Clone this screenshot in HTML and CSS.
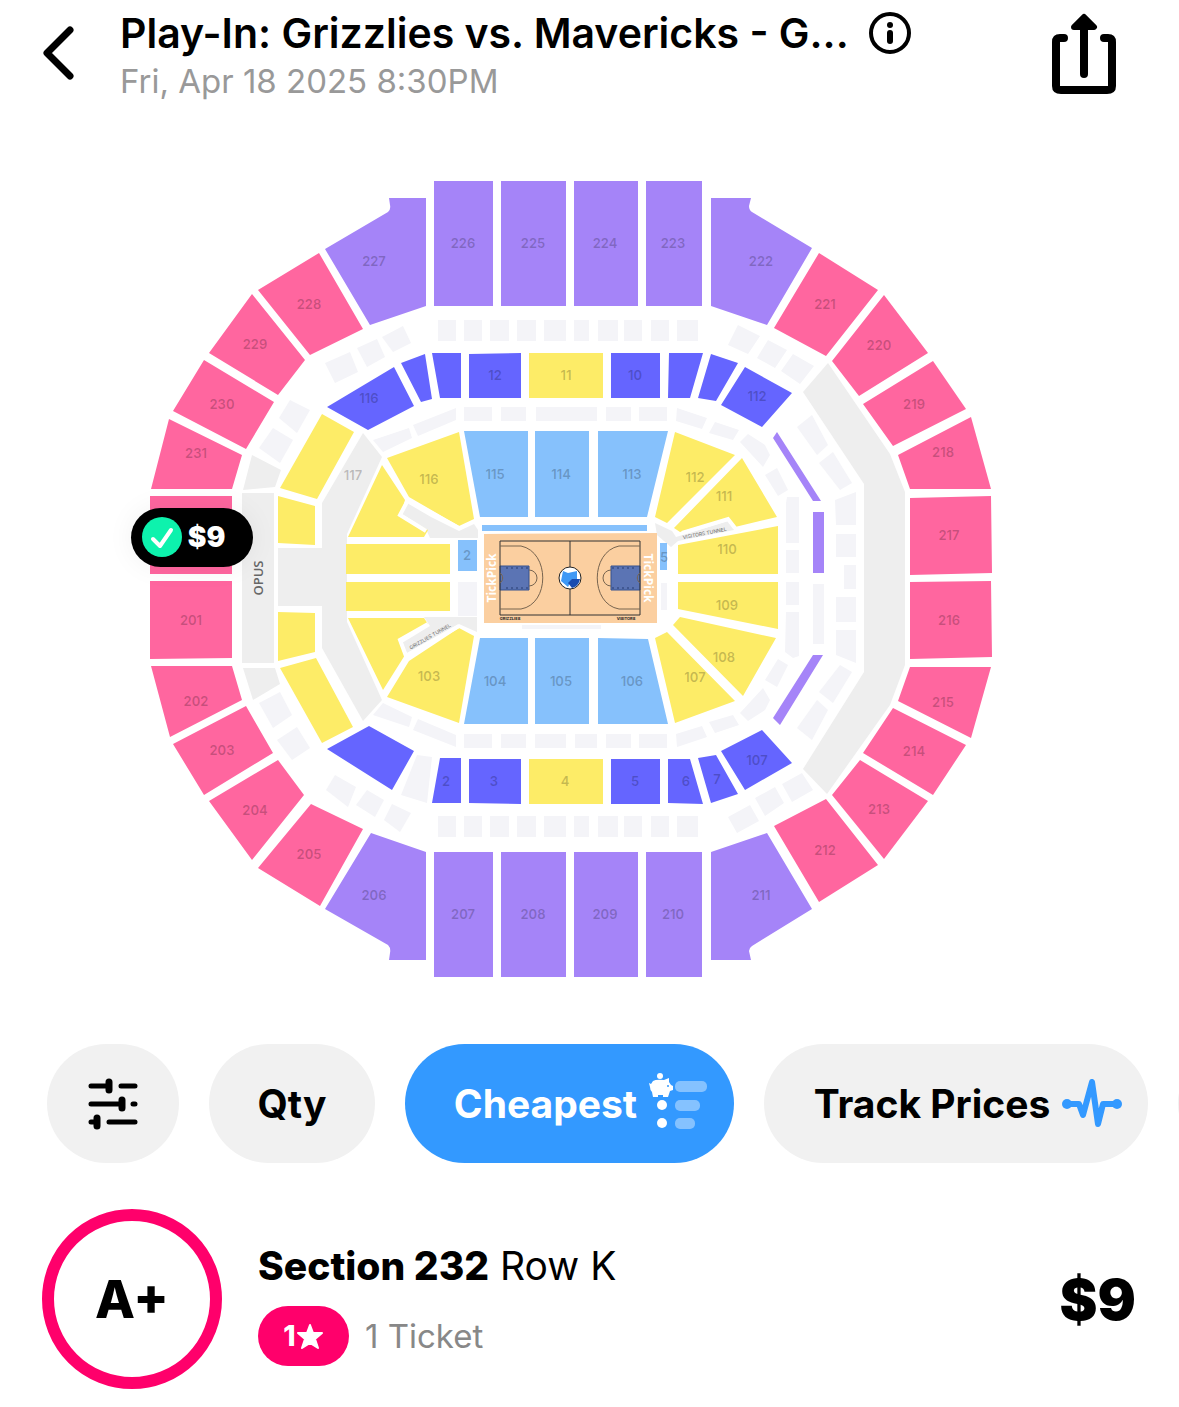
FILE: index.html
```html
<!DOCTYPE html>
<html lang="en">
<head>
<meta charset="utf-8">
<meta name="viewport" content="width=device-width, initial-scale=1">
<title>Play-In: Grizzlies vs. Mavericks</title>
<link rel="stylesheet" href="styles.css">
</head>
<body>
<header class="header">
  <button class="icon-button back" type="button" aria-label="Back">
    <svg width="34" height="56" viewBox="0 0 34 56"><path d="M29 5 L6 28 L29 51" fill="none" stroke="#000" stroke-width="7" stroke-linecap="round" stroke-linejoin="round"/></svg>
  </button>
  <div class="event">
    <div class="title-row">
      <h1 class="title">Play-In: Grizzlies vs. Mavericks - G...</h1>
      <button class="icon-button" type="button" aria-label="Event information">
        <svg width="42" height="42" viewBox="0 0 42 42"><circle cx="21" cy="21" r="19" fill="none" stroke="#000" stroke-width="4"/><circle cx="21" cy="13" r="3"/><path d="M21 21 V29" stroke="#000" stroke-width="6" stroke-linecap="round"/></svg>
      </button>
    </div>
    <p class="date">Fri, Apr 18 2025 8:30PM</p>
  </div>
  <button class="icon-button share" type="button" aria-label="Share">
    <svg width="64" height="82" viewBox="0 0 64 82"><path d="M12 25 H8 Q4 25 4 29 V73 Q4 77 9 77 H55 Q60 77 60 73 V29 Q60 25 56 25 H52" fill="none" stroke="#000" stroke-width="8" stroke-linecap="round"/><path d="M32 15 V61" stroke="#000" stroke-width="8" stroke-linecap="round"/><path d="M32 4 L42 14 H22 Z" stroke="#000" stroke-width="6" stroke-linejoin="round"/></svg>
  </button>
</header>

<main>
<section class="map" aria-label="Seating map">
<svg class="arena" viewBox="0 120 1179 900">
  <g class="gray">
    <path d="M363 433L382 457 347 534V622L382 700 363 721 322 648V606H278V548H322V503Z"/>
    <path d="M242 493H274V663H242ZM252 455L281 470 275 487 243 490ZM243 668H275L280 684 253 700Z"/>
    <path d="M828 363L803 392 864 484V672L803 769 827 794 890 705 905 665V492L890 454Z"/>
    <path d="M407 503L431 517 459 531 474 524 478 530V538H430L426 529 402 514Z"/>
    <path d="M402 643L430 626 424 617H477V632L459 624 407 653Z"/>
    <path d="M655 523L672 531 676 537 728 521 734 530 678 541 671 547 657 535Z"/>
  </g>
  <g class="suite">
    <path d="M438 320h18v21h-18zM464 320h18v21h-18zM490 320h19v21h-19zM517 320h19v21h-19zM544 320h22v21h-22zM574 320h15v21h-15zM598 320h20v21h-20zM624 320h18v21h-18zM651 320h18v21h-18zM677 320h21v21h-21z"/>
    <path d="M438 816h18v21h-18zM464 816h18v21h-18zM490 816h19v21h-19zM517 816h19v21h-19zM544 816h22v21h-22zM574 816h15v21h-15zM598 816h20v21h-20zM624 816h18v21h-18zM651 816h18v21h-18zM677 816h21v21h-21z"/>
    <path d="M464 407h28v14h-28zM501 407h25v14h-25zM536 407h61v14h-61zM606 407h25v14h-25zM639 407h28v14h-28z"/>
    <path d="M464 734h28v14h-28zM501 734h25v14h-25zM535 734h31v14h-31zM575 734h22v14h-22zM606 734h25v14h-25zM639 734h28v14h-28z"/>
    <path d="M325 363L350 352 358 372 335 383ZM357 348L377 339 385 357 367 367ZM382 337L403 326 411 343 393 352Z"/>
    <path d="M728 345L738 325 760 336 748 354ZM757 358L768 340 787 350 775 368ZM781 371L793 354 814 366 800 384Z"/>
    <path d="M728 817L750 805 759 821 737 833ZM755 798L775 787 784 803 765 816ZM782 784L802 773 813 790 792 802Z"/>
    <path d="M326 790L335 775 356 787 348 807ZM356 805L367 790 384 800 375 817ZM384 820L392 804 411 813 400 832Z"/>
    <path d="M279 418L290 400 310 410 297 433ZM259 448L273 428 293 440 280 463ZM259 703L280 692 292 715 273 728ZM277 740L297 727 310 748 292 760Z"/>
    <path d="M373 715L383 703 412 717 409 727ZM413 730L418 719 456 735V747ZM373 440L383 452 412 438 409 428ZM413 425L418 436 456 420V408Z"/>
    <path d="M676 421L677 408 707 418 702 429ZM709 433L715 422 739 430 733 440ZM740 442L748 434 765 445 770 455 763 467ZM765 475L777 468 788 490 778 496Z"/>
    <path d="M676 734L677 747 707 737 702 726ZM709 722L715 733 739 725 733 715ZM740 713L748 721 765 710 770 700 763 688ZM765 680L777 687 788 665 778 659Z"/>
    <path d="M787 497H799V543H786V503ZM786 550h13v23h-13zM786 582h13v23h-13zM786 612h13v44l-6 2 -8-6zM813 584h11v60h-11zM458 582h19v34h-19zM661 583h6v27h-6zM522 625h79v4h-79z"/>
    <path d="M797 427L812 415 828 445 817 455ZM819 463L833 452 852 483 840 490ZM835 500L856 492V525H836ZM836 534h20v23h-20zM844 565h12v24h-12zM836 597h20v25h-20zM836 630H856V663L836 655ZM797 728L812 740 828 710 817 700ZM819 692L833 703 852 672 840 665Z"/>
    <path d="M417 755L432 757 427 803 401 795Z"/>
  </g>
  <g class="purple">
    <path d="M434 181H493V306H434ZM501 181H566V306H501ZM574 181H638V306H574ZM646 181H702V306H646Z"/>
    <path d="M434 852H493V977H434ZM501 852H566V977H501ZM574 852H638V977H574ZM646 852H702V977H646Z"/>
    <path d="M389 198H426V306L370 325 325 249 388 212Q391 209 390 205ZM711 198H751L749 206Q749 210 752 212L812 248 767 325 711 306Z"/>
    <path d="M389 960H426V852L371 833 325 909 388 945Q391 948 390 953ZM711 960H751L749 951Q749 948 752 946L812 909 767 833 711 852Z"/>
    <path d="M773 438L777 432 821 501H813ZM813 512h11v61h-11zM813 655H823L780 725 773 718Z"/>
  </g>
  <g class="pink">
    <path d="M319 253L363 329 310 355 258 290ZM252 294L305 360 278 395 209 353ZM204 360L274 402 246 449 173 411ZM169 419L242 455 232 489H151ZM150 496H232V574H150ZM150 581H232V658L150 659Z"/>
    <path d="M819 253L878 290 826 356 774 328ZM884 295L928 353 859 396 832 361ZM933 361L966 409 893 446 863 404ZM971 417L991 489H910L898 455ZM910 498L991 496 992 573 910 575ZM910 582L991 581 992 657 910 659Z"/>
    <path d="M151 666H232L242 700 170 737ZM246 706L273 753 204 795 173 744ZM278 760L304 795 252 860 209 801ZM311 804L363 829 320 906 258 868Z"/>
    <path d="M910 667H991L971 738 898 701ZM893 708L966 745 933 795 863 753ZM860 760L928 801 884 859 832 795ZM826 799L878 865 819 902 774 826Z"/>
  </g>
  <g class="indigo">
    <path d="M327 407L394 367 414 406 368 430ZM401 363L425 354 432 399 421 402ZM432 353H461V398H440ZM469 354L521 353V398H469ZM611 353H660V398H611ZM669 353H703L690 398H668ZM711 354L738 363 716 401 698 398ZM745 367L792 393 762 427 721 405Z"/>
    <path d="M327 749L369 726 414 751 392 790ZM440 758H461V803H432ZM469 759H521V804L469 803ZM611 759H660V804H611ZM668 759H690L703 804 668 803ZM698 758L716 755 738 794 711 803ZM762 730L792 763 745 790 721 751Z"/>
  </g>
  <g class="yellow">
    <path d="M529 353H603V398H529ZM529 759H603V804H529Z"/>
    <path d="M322 414L354 432 317 499 280 488ZM278 496L315 506V545L278 543ZM278 612L315 613V652L278 661ZM280 668L316 658 353 727 322 743Z"/>
    <path d="M387 458L459 432 474 519 459 526 409 497ZM382 465L405 500 401 515 428 530 424 537H348ZM346 544H450V574H346ZM346 582H450V611H346ZM348 618H424L428 624 401 640 405 655 383 690ZM387 697L409 661 459 628 474 636 459 723Z"/>
    <path d="M675 432L735 455 667 523 655 517ZM742 458L777 517 735 527 728 518 680 532 674 528ZM678 545L778 526V574H678ZM678 582H778V629L678 609ZM673 625L680 617 776 638 743 696ZM655 638L667 632 735 701 675 723Z"/>
  </g>
  <g class="sky">
    <path d="M464 431H528V517H480ZM535 431H589V517H535ZM598 431H668L647 517H598ZM480 638H528V724H464ZM535 638H589V724H535ZM598 638L648 639 668 724H598ZM482 525H647V531H482ZM458 540H477V571H458ZM660 543H667V570H660Z"/>
  </g>

  <path class="tunnel" d="M459 528L408 500 400 515 426 531M428 624L400 640 406 656 459 626M682 533L728 519 735 528"/>
  <path class="wood" d="M484 534L657 533V623H484Z"/>
  <g class="court">
    <path class="key" d="M500 566h29v24h-29zM611 566h29v24h-29z"/>
    <path d="M500 541H640V615H500ZM570 541V615"/>
    <path class="thin" d="M500 546H521C550 552 550 604 521 609H500M640 546H619C590 552 590 604 619 609H640M529 570A8 8 0 0 1 529 586M611 570A8 8 0 0 0 611 586M500 573A6 6 0 0 1 500 583M640 573A6 6 0 0 0 640 583"/>
    <path class="dots" d="M506 568H528M506 588H528M612 568H634M612 588H634"/>
    <circle class="ball" cx="570" cy="578" r="11"/>
    <path class="logo-light" d="M563 571L568 573 577 571 577 580 571 581 568 587 561 581Z"/>
    <path class="logo-dark" d="M568 583L572 579 580 579Q579 586 572 588Z"/>
  </g>
  <text class="brand" transform="translate(496 578) rotate(-90)">TickPick</text>
  <text class="brand" transform="translate(644 578) rotate(90)">TickPick</text>
  <text class="tiny dark" x="510" y="620">GRIZZLIES</text>
  <text class="tiny dark" x="626" y="620">VISITORS</text>
  <text class="tiny" transform="translate(431 638) rotate(-30)">GRIZZLIES TUNNEL</text>
  <text class="tiny" transform="translate(705 535) rotate(-11)">VISITORS TUNNEL</text>
  <text class="opus" transform="translate(263 578) rotate(-90)">OPUS</text>

  <g class="label">
    <text x="463" y="248">226</text><text x="533" y="248">225</text><text x="605" y="248">224</text><text x="673" y="248">223</text>
    <text x="374" y="266">227</text><text x="761" y="266">222</text><text x="309" y="309">228</text><text x="825" y="309">221</text>
    <text x="255" y="349">229</text><text x="879" y="350">220</text><text x="222" y="409">230</text><text x="914" y="409">219</text>
    <text x="196" y="458">231</text><text x="943" y="457">218</text><text x="949" y="540">217</text><text x="191" y="625">201</text><text x="949" y="625">216</text>
    <text x="196" y="706">202</text><text x="943" y="707">215</text><text x="222" y="755">203</text><text x="914" y="756">214</text>
    <text x="255" y="815">204</text><text x="879" y="814">213</text><text x="309" y="859">205</text><text x="825" y="855">212</text>
    <text x="374" y="900">206</text><text x="761" y="900">211</text><text x="463" y="919">207</text><text x="533" y="919">208</text><text x="605" y="919">209</text><text x="673" y="919">210</text>
    <text x="369" y="403">116</text><text x="495" y="380">12</text><text x="566" y="380">11</text><text x="635" y="380">10</text><text x="757" y="401">112</text>
    <text x="353" y="480">117</text><text x="429" y="484">116</text><text x="495" y="479">115</text><text x="561" y="479">114</text><text x="632" y="479">113</text><text x="695" y="482">112</text><text x="724" y="501">111</text><text x="727" y="554">110</text>
    <text x="727" y="610">109</text><text x="724" y="662">108</text><text x="695" y="682">107</text><text x="429" y="681">103</text><text x="495" y="686">104</text><text x="561" y="686">105</text><text x="632" y="686">106</text>
    <text x="446" y="786">2</text><text x="494" y="786">3</text><text x="565" y="786">4</text><text x="635" y="786">5</text><text x="686" y="786">6</text><text x="717" y="784">7</text><text x="757" y="765">107</text><text x="467" y="560">2</text><text x="664" y="562">5</text>
  </g>
</svg>
<button class="pin" type="button" aria-label="Section 232, $9">
  <svg width="40" height="40" viewBox="0 0 40 40"><circle cx="20" cy="20" r="20" fill="#0df2ad"/><path d="M11 22 L18 29 L29 13" fill="none" stroke="#fff" stroke-width="4" stroke-linecap="round" stroke-linejoin="round"/></svg>
  <span>$9</span>
</button>
</section>

<nav class="chips" aria-label="Filters">
  <button class="chip chip-filter" type="button" aria-label="All filters">
    <svg width="50" height="52" viewBox="0 0 50 52" fill="none" stroke="#000" stroke-width="5" stroke-linecap="round"><path d="M3 8H21M33 8H47M3 26H34M45 26H47M3 44H7M21 44H47"/><path d="M21 4V12M34 22V30M9 40V48" stroke-width="7"/></svg>
  </button>
  <button class="chip chip-qty" type="button">Qty</button>
  <button class="chip chip-active" type="button">Cheapest
    <svg class="list-icon" width="58" height="56" viewBox="0 0 58 56" fill="#fff"><g opacity=".4"><rect x="26" y="8" width="32" height="11" rx="5"/><rect x="26" y="27" width="25" height="11" rx="5"/><rect x="26" y="45" width="20" height="11" rx="5"/></g><circle cx="13" cy="32" r="5"/><circle cx="13" cy="50" r="5"/><circle cx="11" cy="3" r="3"/><path d="M4 8Q7 6 15 7L20 5V9L22 12 24 13V17L21 18 19 24H14V22H9V24H4L3 19Q1 17 1 14L0 10 2 11Z"/><circle cx="19" cy="13" r="1" fill="#39f"/></svg>
  </button>
  <button class="chip chip-track" type="button">Track Prices
    <svg width="60" height="50" viewBox="0 0 60 50"><path d="M5 25H17L21 36 30 3 36 45 41 25H55" fill="none" stroke="#39f" stroke-width="6" stroke-linejoin="round"/><circle cx="5" cy="25" r="5" fill="#39f"/><circle cx="55" cy="25" r="5" fill="#39f"/></svg>
  </button>
  <span class="chip chip-next"></span>
</nav>

<article class="listing">
  <div class="grade">A+</div>
  <div class="details">
    <h2 class="seat"><b>Section 232</b> Row K</h2>
    <div class="meta">
      <span class="rating">1<svg width="28" height="27" viewBox="0 0 28 27"><path d="M14 2L17 10 26 10 19 16 22 25 14 20 6 25 9 16 2 10 11 10Z" fill="#fff" stroke="#fff" stroke-width="2" stroke-linejoin="round"/></svg></span>
      <span class="tickets">1 Ticket</span>
    </div>
  </div>
  <div class="price">$9</div>
</article>
</main>
</body>
</html>
```
FILE: styles.css
```css
* { box-sizing: border-box; }

body {
  margin: 0;
  background: #fff;
  color: #000;
  font-family: Inter, "Liberation Sans", sans-serif;
  overflow-x: hidden;
}

button { border: 0; font: inherit; color: inherit; cursor: pointer; }
h1, h2, p { margin: 0; }
svg { display: block; flex: none; }

.header {
  display: flex;
  align-items: flex-start;
  height: 120px;
  padding: 8px 63px 0 41px;
}
.icon-button { padding: 0; background: none; flex: none; }
.back { margin-top: 17px; }
.event { flex: 1; min-width: 0; margin-left: 45px; }
.title-row { display: flex; align-items: center; gap: 20px; }
.title {
  font-size: 41px;
  font-weight: 600;
  line-height: 50px;
  white-space: nowrap;
  overflow: hidden;
}
.date { color: #999; font-size: 33px; line-height: 46px; }
.share { margin-top: 5px; }

.map { position: relative; }
.arena { width: 100%; height: auto; }
.gray { fill: #eee; }
.suite { fill: #f4f4f8; }
.purple { fill: #a584f8; }
.pink { fill: #ff669f; }
.indigo { fill: #6565ff; }
.yellow { fill: #fdec67; }
.sky { fill: #86c1fc; }
.wood { fill: #fbcfa0; }
.tunnel { fill: none; stroke: #fff; stroke-width: 4px; }
.court { fill: none; stroke: #333; stroke-width: 1px; }
.key { fill: #5b74b4; stroke: #34508e; }
.thin { stroke: #77644f; }
.dots { stroke: #283c70; stroke-dasharray: 2 3; }
.ball { fill: #fff; stroke: #222; }
.logo-light { fill: #3e98f5; stroke: none; }
.logo-dark { fill: #174bb0; stroke: none; }
.arena text { text-anchor: middle; }
.label { font-size: 13px; font-weight: 600; fill: #000; fill-opacity: .22; }
.brand { font-family: "Open Sans", sans-serif; font-size: 12px; font-weight: 700; fill: #fff; }
.tiny { font-size: 5px; fill: #666; }
.dark { font-size: 4px; font-weight: 700; fill: #222; }
.opus { font-family: "Open Sans", sans-serif; font-size: 13px; font-weight: 600; fill: #666; }

.pin {
  position: absolute;
  left: 11.1%;
  top: 43.1%;
  display: flex;
  align-items: center;
  gap: 6px;
  width: 122px;
  height: 59px;
  padding: 0 11px;
  border-radius: 30px;
  background: #000;
  color: #fff;
  font-size: 28px;
  font-weight: 900;
  box-shadow: 0 0 28px rgba(0, 0, 0, .06);
}

.chips {
  display: flex;
  gap: 30px;
  margin-top: 24px;
  padding-left: 47px;
  overflow: hidden;
}
.chip {
  display: flex;
  flex: none;
  align-items: center;
  justify-content: center;
  height: 119px;
  padding: 0;
  border-radius: 60px;
  background: #f1f1f1;
  font-size: 39px;
  font-weight: 700;
  white-space: nowrap;
}
.chip-filter { width: 132px; }
.chip-qty { width: 166px; }
.chip-active { width: 329px; gap: 12px; padding-left: 22px; background: #39f; color: #fff; }
.chip-track { width: 384px; gap: 12px; padding-left: 24px; }
.chip-next { width: 160px; }
.list-icon { margin-bottom: 6px; }

.listing {
  display: flex;
  align-items: center;
  margin-top: 46px;
  padding: 0 43px 18px 42px;
}
.grade {
  display: flex;
  align-items: center;
  justify-content: center;
  flex: none;
  width: 180px;
  height: 180px;
  border: 12px solid #ff006b;
  border-radius: 50%;
  font-size: 52px;
  font-weight: 800;
}
.details { flex: 1; margin: 10px 0 0 36px; }
.seat { font-size: 39px; font-weight: 400; line-height: 48px; }
.seat b { font-weight: 800; }
.meta { display: flex; align-items: center; gap: 16px; margin-top: 16px; }
.rating {
  display: flex;
  align-items: center;
  justify-content: center;
  width: 91px;
  height: 60px;
  border-radius: 30px;
  background: #ff006b;
  color: #fff;
  font-size: 28px;
  font-weight: 800;
}
.tickets { color: #888; font-size: 33px; }
.price { font-size: 57px; font-weight: 900; }
```
